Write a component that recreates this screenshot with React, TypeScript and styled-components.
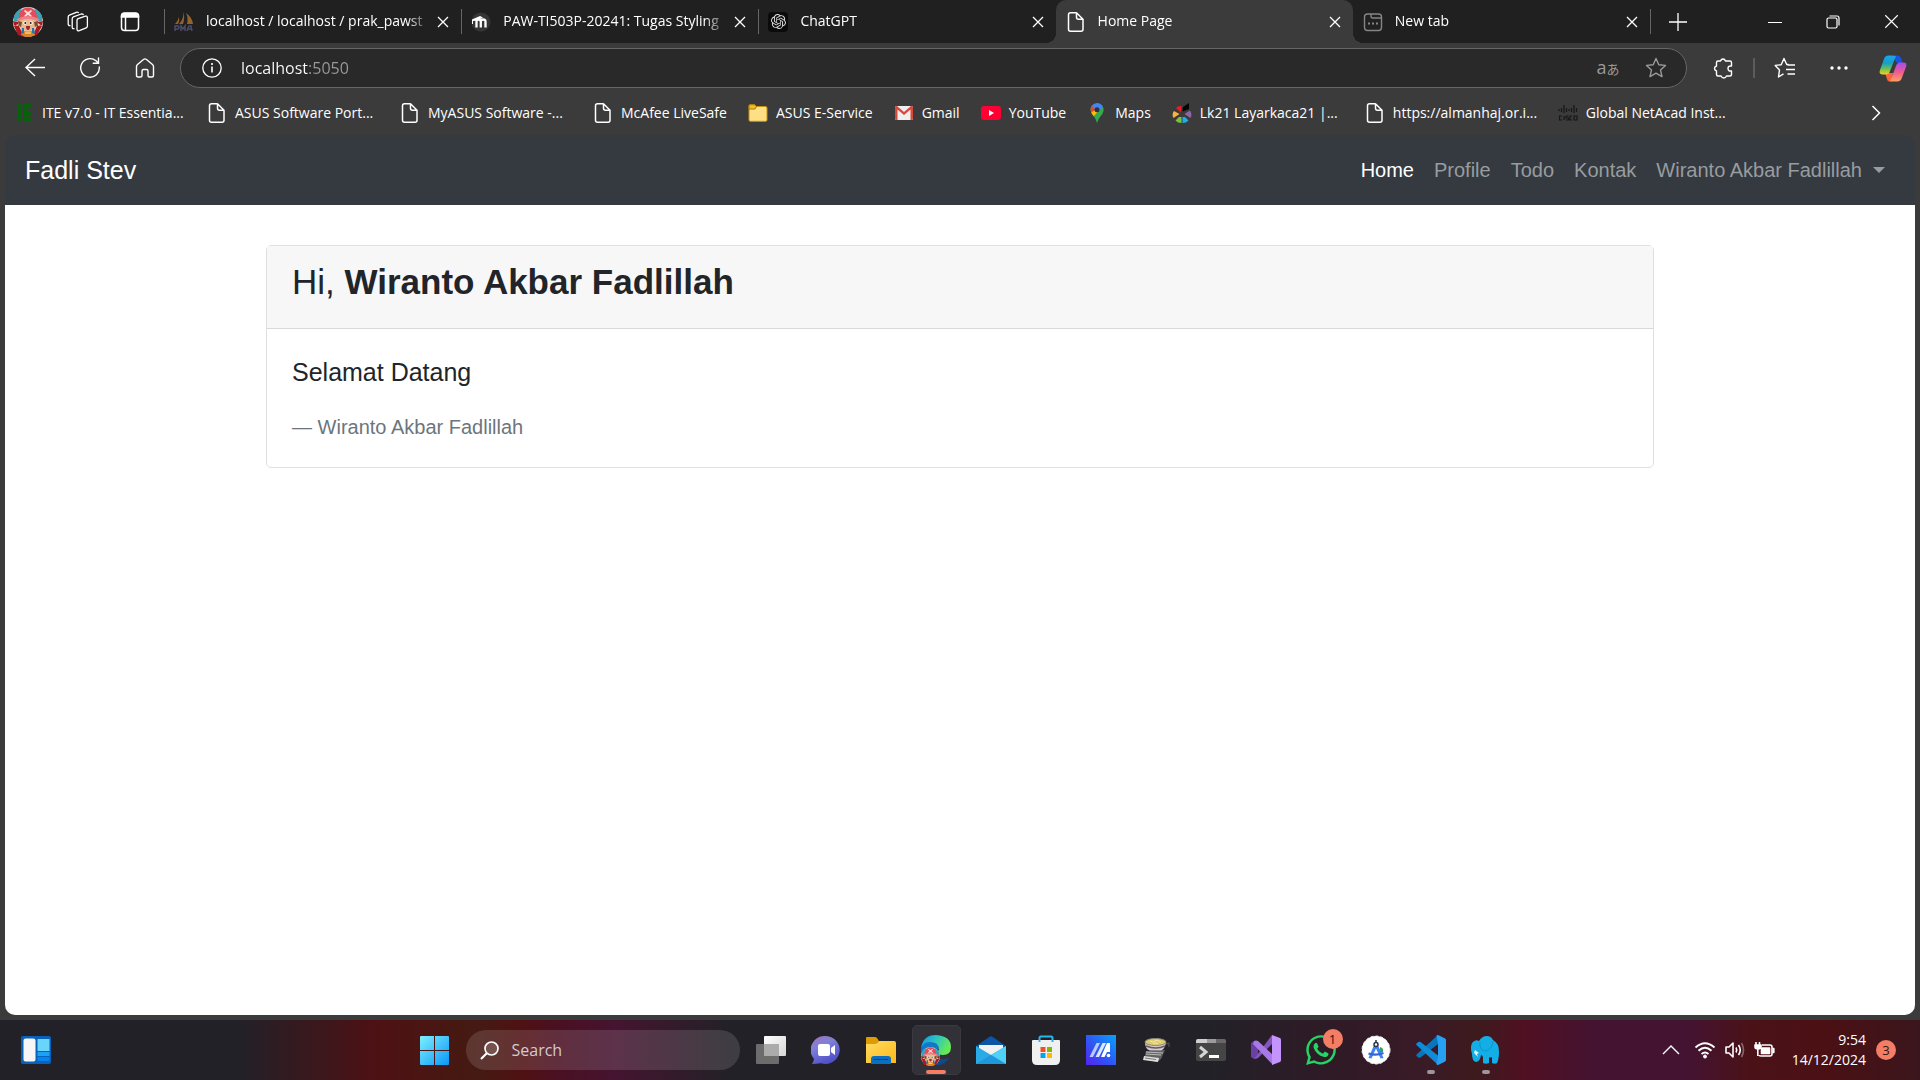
import React from "react";
import styled, { createGlobalStyle, css } from "styled-components";
import { SiOpenai } from "react-icons/si";
import { FaWhatsapp } from "react-icons/fa";

const uiFont = '"Segoe UI", "Open Sans", "Noto Sans", "Noto Sans CJK JP", sans-serif';
const pageFont = '"Liberation Sans", Arial, sans-serif';
const chrome = "#3b3b3b";
const strip = "#202020";

const GlobalStyle = createGlobalStyle`
  *, *::before, *::after { box-sizing: border-box; }
  body { margin: 0; background: ${chrome}; font-family: ${uiFont}; }
  button { font: inherit; }
`;

/* ---------- shared pieces ---------- */

const Screen = styled.div`
  display: flex;
  flex-direction: column;
  min-height: 100vh;
  background: ${chrome};
`;

const IconButton = styled.button<{ $w?: number }>`
  display: flex;
  align-items: center;
  justify-content: center;
  flex: none;
  width: ${(p) => p.$w ?? 48}px;
  height: 100%;
  padding: 0;
  border: 0;
  background: none;
  color: #fff;
  cursor: pointer;
`;

const Line = styled.svg.attrs({ fill: "none", stroke: "currentColor", "aria-hidden": true })`
  display: block;
  flex: none;
`;

const Art = styled.svg.attrs({ "aria-hidden": true })`
  display: block;
  flex: none;
`;

/* ---------- tab strip ---------- */

const TabStrip = styled.header`
  display: flex;
  height: 43px;
  background: ${strip};
`;

const StripTools = styled.div`
  display: flex;
  flex: none;
  padding-left: 3px;
  width: 164px;
`;

const TabList = styled.div`
  display: flex;
  flex: 0 1 1486px;
  min-width: 0;
`;

const NewTabSlot = styled.div`
  display: flex;
  align-items: center;
`;

const activeTab = css`
  background: ${chrome};
  border-radius: 10px 10px 0 0;
  &::before, &::after {
    content: "";
    position: absolute;
    bottom: 0;
    width: 10px;
    height: 10px;
  }
  &::before { left: -10px; background: radial-gradient(circle at 0 0, transparent 10px, ${chrome} 10px); }
  &::after { right: -10px; background: radial-gradient(circle at 100% 0, transparent 10px, ${chrome} 10px); }
`;

const Tab = styled.div<{ $active?: boolean }>`
  position: relative;
  display: flex;
  align-items: center;
  flex: 1 1 0;
  min-width: 0;
  padding-right: 6px;
  ${(p) => p.$active && activeTab}
`;

const TabRule = styled.span<{ $shown?: boolean }>`
  flex: none;
  width: 1px;
  height: 25px;
  background: ${(p) => (p.$shown ? "#666" : "transparent")};
`;

const TabLink = styled.a`
  display: flex;
  align-items: center;
  flex: 1;
  gap: 12px;
  min-width: 0;
  padding-left: 9px;
  color: #fff;
  font-size: 14px;
  line-height: 20px;
  text-decoration: none;
`;

const TabTitle = styled.span`
  flex: 1;
  overflow: hidden;
  white-space: nowrap;
  padding-bottom: 2px;
  mask-image: linear-gradient(90deg, #000 calc(100% - 24px), transparent);
`;

const WindowButtons = styled.div`
  display: flex;
  margin-left: auto;
`;

/* ---------- toolbar ---------- */

const Toolbar = styled.div`
  display: flex;
  align-items: center;
  height: 50px;
  padding: 0 3px 0 7px;
`;

const Address = styled.form`
  display: flex;
  align-items: center;
  flex: 1;
  min-width: 0;
  height: 40px;
  margin: 0 12px 0 8px;
  padding: 0 6px 0 7px;
  border: 1px solid #666;
  border-radius: 20px;
  background: #292929;
`;

const AddressInput = styled.input`
  flex: 1;
  min-width: 0;
  margin-left: 5px;
  padding: 0;
  border: 0;
  outline: 0;
  color: #fff;
  font-family: ${uiFont};
  font-size: 16px;
  line-height: 24px;
  background: linear-gradient(90deg, #fff 67px, #9a9a9a 67px);
  background-clip: text;
  -webkit-text-fill-color: transparent;
`;

const Translate = styled.span`
  color: #9a9a9a;
  font-size: 18px;
  line-height: 20px;
  small { font-size: 13px; }
`;

const ToolRule = styled.span`
  width: 2px;
  height: 20px;
  margin: 0 6px;
  background: #5c5c5c;
`;

const MutedButton = styled(IconButton)`
  color: #9a9a9a;
`;

/* ---------- bookmarks ---------- */

const Bookmarks = styled.nav`
  display: flex;
  align-items: center;
  gap: 20px;
  height: 42px;
  padding: 0 20px 2px 14px;
`;

const Bookmark = styled.a<{ $wide?: boolean }>`
  display: flex;
  align-items: center;
  flex: none;
  gap: 8px;
  width: ${(p) => (p.$wide ? "173px" : "auto")};
  padding-right: ${(p) => (p.$wide ? 0 : 1)}px;
  color: #fff;
  font-size: 14px;
  line-height: 20px;
  text-decoration: none;
  white-space: nowrap;
`;

/* ---------- web page ---------- */

const Page = styled.main`
  flex: 1;
  margin: 0 5px 5px;
  border-radius: 10px;
  overflow: hidden;
  background: linear-gradient(#343a40 70px, #fff 70px);
  color: #212529;
  font-family: ${pageFont};
`;

const Navbar = styled.nav`
  display: flex;
  align-items: center;
  justify-content: space-between;
  height: 70px;
  padding: 0 30px 0 20px;
`;

const Brand = styled.a`
  color: #fff;
  font-size: 25px;
  line-height: 38px;
  text-decoration: none;
`;

const NavList = styled.ul`
  display: flex;
  gap: 20px;
  margin: 0;
  padding: 0;
  list-style: none;
`;

const NavLink = styled.a<{ $active?: boolean }>`
  display: flex;
  align-items: center;
  gap: 11px;
  color: ${(p) => (p.$active ? "#fff" : "#999c9f")};
  font-size: 20px;
  line-height: 30px;
  text-decoration: none;
`;

const Caret = styled.span`
  border: 6px solid transparent;
  border-top-color: currentColor;
  border-bottom: 0;
`;

const Card = styled.section`
  max-width: 1388px;
  margin: 40px auto 0;
  border: 1px solid #dfdfdf;
  border-radius: 5px;
`;

const CardHeader = styled.div`
  padding: 15px 25px 25px;
  border-bottom: 1px solid #d9d9d9;
  background: #f7f7f7;
`;

const Greeting = styled.h1`
  margin: 0;
  font-size: 35px;
  font-weight: 300;
  line-height: 42px;
  b { font-weight: 700; }
`;

const Quote = styled.blockquote`
  margin: 0;
  padding: 24px 25px 25px;
  p { margin: 0 0 21px; font-size: 25px; line-height: 38px; }
  footer { color: #6c757d; font-size: 20px; line-height: 30px; }
`;

/* ---------- taskbar ---------- */

const Taskbar = styled.footer`
  display: grid;
  grid-template-columns: 1fr auto 1fr;
  align-items: center;
  height: 60px;
  background: linear-gradient(
    90deg,
    #232128 12.5%, #351a1f 15.5%, #4d1114 19.5%, #4a1512 22%, #451a13 25%, #4f1113 27.2%,
    #4a1022 29%, #451430 32%, #232128 38%, #232128 63%, #301a26 70%, #391b27 74%,
    #3e1a1d 77%, #501023 79.5%, #441331 83%, #441331 88%, #4a1218 91%, #4b1014 95%, #3a161c 100%
  );
`;

const TaskStart = styled.div`
  padding-left: 8px;
  height: 50px;
`;

const TaskMiddle = styled.div`
  display: flex;
  align-items: center;
`;

const SearchBox = styled.label`
  display: flex;
  align-items: center;
  gap: 13px;
  width: 274px;
  height: 40px;
  margin: 0 4px;
  padding: 0 14px;
  border-radius: 20px;
  background: rgba(255, 255, 255, 0.13);
  color: #fff;
`;

const SearchInput = styled.input`
  flex: 1;
  min-width: 0;
  padding: 0;
  border: 0;
  outline: 0;
  background: none;
  color: #fff;
  font-family: ${uiFont};
  font-size: 16px;
  line-height: 24px;
  &::placeholder { color: #d2cbd0; opacity: 1; }
`;

const AppButton = styled.button<{ $active?: boolean; $open?: boolean }>`
  position: relative;
  display: flex;
  align-items: center;
  justify-content: center;
  width: 49px;
  height: 50px;
  margin: 0 3px;
  padding: 0;
  border: 1px solid ${(p) => (p.$active ? "#3b3940" : "transparent")};
  border-radius: 5px;
  background: ${(p) => (p.$active ? "#333138" : "none")};
  &::after {
    content: "";
    display: ${(p) => (p.$active || p.$open ? "block" : "none")};
    position: absolute;
    bottom: 0;
    left: 50%;
    width: ${(p) => (p.$active ? 20 : 8)}px;
    height: 4px;
    transform: translateX(-50%);
    border-radius: 2px;
    background: ${(p) => (p.$active ? "#f37e65" : "#9d959b")};
  }
`;

const Badge = styled.span<{ $floating?: boolean }>`
  display: flex;
  align-items: center;
  justify-content: center;
  width: 20px;
  height: 20px;
  border-radius: 50%;
  background: #f37e65;
  color: #2a1512;
  font-size: 13px;
  line-height: 20px;
  ${(p) => p.$floating && css`
    position: absolute;
    top: 3px;
    right: 2px;
  `}
`;

const Tray = styled.div`
  display: flex;
  align-items: center;
  justify-content: flex-end;
  gap: 10px;
  padding-right: 24px;
  color: #fff;
`;

const TrayStatus = styled.button`
  display: flex;
  align-items: center;
  gap: 9px;
  margin-left: 4px;
  padding: 0;
  border: 0;
  background: none;
  color: inherit;
`;

const Clock = styled.time`
  margin-left: 7px;
  font-size: 14px;
  line-height: 20px;
  text-align: right;
`;

/* ---------- icons ---------- */

const AvatarArt = () => (
  <>
    <circle cx="15" cy="15" r="15" fill="#e3d3c8" />
    <path d="M1 19l4 9 6 2-6-13zM29 19l-5 9-4 1 5-13zM0 14l5 1v4l-4-1zM30 14l-5 1v4l4-1z" fill="#a81a20" />
    <path d="M1 9q2-5 7-7l3 5-5 7-5 1zM29 9q-2-5-7-7l-3 5 5 7 5 1z" fill="#3f9fb2" />
    <path d="M6 11C6 4 10 .5 15 .5S24 4 24 11z" fill="#e24c5b" />
    <path d="M12 3l3 2 3-2 1 1-2.500 2.500L19 9l-1 1-3-2-3 2-1-1 2.500-2.500L11 4z" fill="#f8ded8" />
    <path d="M4 12q11-6 22 0l-1 3q-10-5-20 0z" fill="#f08086" />
    <path d="M6 14q9-4 18 0v5q-4 5-9 5t-9-5z" fill="#e9b98d" />
    <path d="M5 14l4 1-1 5q-3-1-3-6zM25 14l-4 1 1 5q3-1 3-6z" fill="#7d4a2c" />
    <circle cx="12" cy="16" r="1.800" fill="#fff" /><circle cx="18" cy="16" r="1.800" fill="#fff" />
    <circle cx="12.300" cy="16" r="1" fill="#231c1c" /><circle cx="17.700" cy="16" r="1" fill="#231c1c" />
    <path d="M13 19h4q0 4-2 4t-2-4z" fill="#a32226" />
    <path d="M9 23q6 3 12 0l1 5q-7 4-14 0z" fill="#e08328" />
    <path d="M9 21h2l0 5-3 1zM19 21h2l1 6-3-1z" fill="#2f6fa7" />
    <path d="M12 26h6" stroke="#f7d16a" strokeWidth="1.500" />
  </>
);

const Avatar = () => (
  <Art width="30" height="30" viewBox="0 0 30 30"><AvatarArt /></Art>
);

const Workspaces = () => (
  <Line width="22" height="22" viewBox="0 0 22 22" strokeWidth="1.3" strokeLinejoin="round" strokeLinecap="round">
    <path d="M10 9.300q0-1.300 1.200-1.700l7.200-2.400q1.800-.5 2 1.200v8.600q0 1.300-1.200 1.800l-6.900 2.900q-2.100.6-2.300-1.300z" />
    <path d="M7 17.700q-1.800.2-1.800-1.500V7.800q0-1.400 1.200-1.900l7.800-2.900q1.300-.3 2 .5" />
    <path d="M3 14.700q-1.800 0-1.800-1.600V6q0-1.400 1.200-1.900L9.300 1.300q1.200-.4 2 .3" />
  </Line>
);

const TabActions = () => (
  <Line width="20" height="20" viewBox="0 0 20 20" strokeWidth="1.500">
    <rect x="1.500" y="1.500" width="17" height="17" rx="3" />
    <path d="M1.500 5V4q0-3 3-3h11q3 0 3 3v1z" fill="currentColor" />
    <path d="M5.500 5v13" />
  </Line>
);

const PmaIcon = () => (
  <Art width="20" height="21" viewBox="0 0 20 21">
    <path d="M5 6q1 4-1 7H1q3-3 4-7zM9.500.5q1.500 7-.5 12.500H5q5-5 4.500-12.500zM12 2q6 4 7 11h-6q1.500-6-1-11z" fill="#94632c" />
    <path d="M1 20v-5h3q2 1 0 3H1M7 20v-5l2 3 2-3v5M13 20l2-5h2l1 5M14 18h4" fill="none" stroke="#4b4c67" strokeWidth="1.500" />
  </Art>
);

const MoodleIcon = () => (
  <Art width="20" height="20" viewBox="0 0 20 20">
    <circle cx="10" cy="10" r="9.500" fill="#363636" />
    <path d="M5.500 15.500V9.500q0-2 2-2t2.300 2v6m0-6q0-2 2.300-2t2.400 2v6" fill="none" stroke="#fff" strokeWidth="2.300" />
    <path d="M1 7.500L9 4l3 1.500-5.500 3L2 9v3H1z" fill="#fff" />
  </Art>
);

const GptTile = styled.span`
  display: flex;
  align-items: center;
  justify-content: center;
  flex: none;
  width: 20px;
  height: 20px;
  border-radius: 4px;
  background: #0b0b0b;
  color: #ddd;
`;

const FileIcon = () => (
  <Line width="20" height="20" viewBox="0 0 20 20" strokeWidth="1.500" strokeLinejoin="round">
    <path d="M10.500.8H4.500Q2.500.8 2.500 2.800v14.400q0 2 2 2h10.500q2 0 2-2V7.200L10.500.8v4.400q0 2 2 2h4.500" />
  </Line>
);

const NewTabIcon = () => (
  <Line width="20" height="20" viewBox="0 0 20 20" strokeWidth="1.400" color="#858585">
    <rect x="1.500" y="2" width="17" height="16.500" rx="3" />
    <path d="M8 2v2.500q0 1.500 1.500 1.500h9" />
    <path d="M5 11.500h2M9 11.500h2M13 11.500h2" strokeWidth="2" />
  </Line>
);

const Cross = ({ size = 12 }: { size?: number }) => (
  <Line width={size} height={size} viewBox="0 0 12 12" strokeWidth={size > 12 ? 0.9 : 1.3}>
    <path d="M1 1l10 10M11 1L1 11" />
  </Line>
);

const Copilot = () => (
  <Art width="28" height="27" viewBox="0 0 28 27">
    <defs>
      <linearGradient id="cpA" x1="0" y1="0" x2="0" y2="1"><stop offset="0" stopColor="#1ba5f0" /><stop offset=".4" stopColor="#159fc4" /><stop offset=".7" stopColor="#6fbe56" /><stop offset="1" stopColor="#f5cf1e" /></linearGradient>
      <linearGradient id="cpB" x1="0" y1="0" x2="0" y2="1"><stop offset="0" stopColor="#a24bf0" /><stop offset=".5" stopColor="#ee5a93" /><stop offset="1" stopColor="#fda25d" /></linearGradient>
    </defs>
    <path d="M13 .5h6q2 0 3 2.500l1.500 5H18z" fill="#1a53de" />
    <path d="M6 18h8l-2 8.500H10.500Q8.500 26.500 8 24z" fill="#f8653b" />
    <path d="M17 1Q15 .5 12 .5H9.500Q6 .5 4.800 4.500L1 15q-1.500 4.500 2.500 4.500H7q3 0 4-3.500z" fill="url(#cpA)" />
    <path d="M11 26.500h7q4 0 5-4L27 12q1.500-4.500-2.500-4.500H21q-3 0-4 3.500z" fill="url(#cpB)" />
  </Art>
);

const FolderSmall = () => (
  <Art width="20" height="18" viewBox="0 0 20 18">
    <path d="M1 4V2q0-1.300 1.300-1.300h4L8.500 2.500h9Q19 2.500 19 4v12q0 1.300-1.300 1.300H2.300Q1 17.300 1 16z" fill="#ffdf85" stroke="#c49310" />
    <path d="M1 5V2q0-1.300 1.300-1.300h4L8.500 2.500 7 5z" fill="#f0bd2c" stroke="#a97b08" />
  </Art>
);

const GmailIcon = () => (
  <Art width="20" height="16" viewBox="0 0 20 16">
    <rect x="1" y="1" width="18" height="14" rx="1.500" fill="#f0efef" />
    <path d="M1 2.500v11Q1 15 2.500 15H3.500V4.500L10 10l6.500-5.500V15h1q1.500 0 1.500-1.500v-11Q19 .8 17 1l-7 6-7-6Q1 .8 1 2.500z" fill="#d9483b" />
  </Art>
);

const YoutubeIcon = () => (
  <Art width="20" height="14" viewBox="0 0 20 14">
    <rect width="20" height="14" rx="3" fill="#ff0033" />
    <path d="M8 4l5 3-5 3z" fill="#fff" />
  </Art>
);

const MapsIcon = () => (
  <Art width="20" height="20" viewBox="0 0 20 20">
    <path d="M10 20q-1-4-3.300-6.700Q3.500 10 3.500 6.700q0-2 1-3.700L15.800 3.500Q17 6 16.500 8q-.5 2.500-2.700 5Q11 16 10 20z" fill="#34a853" />
    <path d="M4.200 8.800Q4.700 11 6.700 13.300L14 5 7 3z" fill="#fbbc04" />
    <path d="M4.800 2.500l4 4-4.500 3Q2.800 5 4.800 2.500z" fill="#ea4335" />
    <path d="M4.800 2.500Q7 0 10 0q4 0 5.800 3.500L11 9 8 6z" fill="#4285f4" />
    <circle cx="10" cy="6.700" r="2.500" fill="#293247" />
  </Art>
);

const LkIcon = () => (
  <Art width="20" height="20" viewBox="0 0 20 20">
    <path d="M9 9.500L4 5q2-2.500 5.500-2z" fill="#ed1c24" />
    <path d="M10.500 8.500L11 4l6-4v6z" fill="#050505" />
    <path d="M7.500 11L1.500 15q-2-4 .5-7z" fill="#fbb040" />
    <path d="M12.500 11l5.500-3.500q2.500 4 .5 7.500z" fill="#8f64a8" />
    <path d="M9.500 14v6q-4 0-6-2.500L7 14z" fill="#7ac143" />
    <path d="M10.500 14H13l3.500 3.500q-2 2.500-6 2.500z" fill="#1caee4" />
  </Art>
);

const IteIcon = () => (
  <Art width="20" height="20" viewBox="0 0 20 20"><path d="M3 1h5v18H3zM10 1h8v4h-4v3h3v4h-3v3h4v4h-8z" fill="#085f0c" /></Art>
);

const CiscoIcon = () => (
  <Art width="20" height="18" viewBox="0 0 20 18">
    <path d="M1 5v2M3.500 4v4M6 1v8M8.500 4v4M11 5v2M13.500 4v4M16 1v8M18.500 4v4" stroke="#171717" strokeWidth="1.200" />
    <path d="M4 12H1.500v4H4M6 12v4M10.500 12H8v2h2.500v2H8M14 12h-2v4h2M16 12h3v4h-3z" stroke="#171717" fill="none" strokeWidth="1.200" />
  </Art>
);

const Widgets = () => (
  <Art width="30" height="28" viewBox="0 0 30 28">
    <rect width="30" height="28" rx="2" fill="#0a61ba" />
    <rect x="2.500" y="2.500" width="12" height="23" rx="2" fill="#f6f6f6" />
    <path d="M16.500 3h12v12h-12z" fill="#69d5fb" /><path d="M16.500 16h12v4h-12z" fill="#1ba1f5" /><path d="M16.500 21h12v4h-12z" fill="#0484ec" />
  </Art>
);

const WindowsLogo = () => (
  <Art width="29" height="29" viewBox="0 0 29 29">
    <defs><linearGradient id="win" x1="0" y1="0" x2="1" y2="1"><stop stopColor="#7cf0ff" /><stop offset="1" stopColor="#0c96f8" /></linearGradient></defs>
    <path d="M1 0h13v14H0V1q0-1 1-1zM15 0h13q1 0 1 1v13H15zM0 15h14v14H1q-1 0-1-1zM15 15h14v13q0 1-1 1H15z" fill="url(#win)" />
  </Art>
);

const TaskView = () => (
  <Art width="30" height="28" viewBox="0 0 30 28">
    <defs><linearGradient id="tv" x1="0" y1="0" x2="1" y2="1"><stop stopColor="#fff" /><stop offset="1" stopColor="#d5d5d5" /></linearGradient></defs>
    <rect x="8" width="22" height="20" rx="1" fill="url(#tv)" />
    <rect y="8" width="23" height="20" rx="1" fill="#6c6c6c" /><path d="M8 8h15v12H8z" fill="#ababab" />
  </Art>
);

const ChatIcon = () => (
  <Art width="30" height="30" viewBox="0 0 30 30">
    <defs><linearGradient id="chat" x1="0" y1="0" x2=".5" y2="1"><stop stopColor="#a370b4" /><stop offset=".4" stopColor="#7f81d8" /><stop offset="1" stopColor="#5050c8" /></linearGradient></defs>
    <path d="M15 1a14 14 0 1 1-5 27.200Q6 29 1 29q2-3 2-5A14 14 0 0 1 15 1z" fill="url(#chat)" />
    <rect x="7" y="9" width="12" height="12" rx="2" fill="#fff" /><path d="M20 13l4-3v10l-4-3z" fill="#fff" />
  </Art>
);

const Explorer = () => (
  <Art width="30" height="28" viewBox="0 0 30 28">
    <defs><linearGradient id="exp" x1="0" y1="0" x2="1" y2="1"><stop stopColor="#ffda62" /><stop offset="1" stopColor="#fdba18" /></linearGradient></defs>
    <path d="M0 2q0-1 1-1h8q1 0 2 1l2 3-3 4H0z" fill="#dd9c05" />
    <path d="M0 8h9q2 0 3-2l1-1h15q2 0 2 2v20H0z" fill="url(#exp)" />
    <path d="M5 28v-5q0-3 3-3h14q3 0 3 3v5z" fill="#0b6fc1" /><path d="M8 23.500h14" stroke="#06427d" />
  </Art>
);

const Edge = () => (
  <Art width="32" height="32" viewBox="0 0 32 32">
    <defs>
      <linearGradient id="edA" x1="0" y1="0" x2="1" y2=".4"><stop stopColor="#1c8fe0" /><stop offset=".5" stopColor="#2cc3c4" /><stop offset="1" stopColor="#65e957" /></linearGradient>
    </defs>
    <path d="M1 14Q3 1 16 1q15 1 15 12 0 8-8 8-5 0-6-3 3-2 1-5-3-4-8-4-6 0-9 5z" fill="url(#edA)" />
    <path d="M1 16q1-8 9-8 8 0 9 6-4 3-3 7 2 5 8 6-8 4-15-1Q1 24 1 16z" fill="#1179c9" />
    <path d="M15 23q6 4 14 1-5 8-13 7z" fill="#0d4b90" />
    <svg x="1" y="13" width="19" height="19" viewBox="0 0 30 30"><AvatarArt /></svg>
  </Art>
);

const MailIcon = () => (
  <Art width="30" height="28" viewBox="0 0 30 28">
    <path d="M0 10L14 .5q1-.7 2 0L30 10v4H0z" fill="#0a55a5" />
    <path d="M3 9h24v10H3z" fill="#f1f1f1" />
    <path d="M0 10l15 9L30 10v18H0z" fill="#2aabe8" />
    <path d="M30 10v18L15 19z" fill="#4fd0f6" /><path d="M0 28l15-9 15 9z" fill="#1e97dc" />
  </Art>
);

const StoreIcon = () => (
  <Art width="30" height="30" viewBox="0 0 30 30">
    <path d="M1 6q0-1 1-1h26q1 0 1 1v19q0 5-5 5H6q-5 0-5-5z" fill="#f0f0f0" />
    <path d="M8.500 7V3q0-1.500 1.500-1.500h10q1.500 0 1.500 1.500v4" fill="none" stroke="#2bb5e8" strokeWidth="2" />
    <path d="M9.500 12h5v5h-5z" fill="#f25022" /><path d="M16 12h5v5h-5z" fill="#7fba00" /><path d="M9.500 18h5v5h-5z" fill="#00a4ef" /><path d="M16 18h5v5h-5z" fill="#ffb900" />
  </Art>
);

const MyAsus = () => (
  <Art width="30" height="30" viewBox="0 0 30 30">
    <defs><linearGradient id="asus" x1="0" y1="1" x2="1" y2="0"><stop stopColor="#5521f2" /><stop offset=".5" stopColor="#2c5cf5" /><stop offset="1" stopColor="#07a2fb" /></linearGradient></defs>
    <path d="M0 0h30v30H0z" fill="url(#asus)" />
    <path d="M10.500 8h3.500L7 22H3.500z" fill="#b5ccff" /><path d="M16.500 8H20l-7 14H9.500z" fill="#dce7ff" />
    <path d="M21 8h3v9h-3l-2.500 5h-3.500z" fill="#fff" /><circle cx="22.500" cy="20.500" r="1.800" fill="#fff" />
  </Art>
);

const BowlIcon = () => (
  <Art width="30" height="30" viewBox="0 0 30 30">
    <path d="M5 16l19-1-4 9-4 3-13-3z" fill="#626264" />
    <path d="M3 21l15 2-1 4-15-2z" fill="#dedede" /><path d="M4 23l11 1.500" stroke="#777" />
    <path d="M5 17l17 1M5 19l15 1" stroke="#bdbdbd" />
    <path d="M4 7h21q-1 7-5 8.500H9Q4 14 4 7z" fill="#d0ccd0" /><path d="M5 11q10 4 19 0" stroke="#6b5560" fill="none" strokeWidth="1.500" />
    <ellipse cx="14.500" cy="7" rx="10.500" ry="3.500" fill="#dcca70" stroke="#8e8a78" />
    <path d="M9 6q3 2 5 0t6 1M12 8.500q3-1 5 0" stroke="#f5eaa8" fill="none" /><path d="M25 9l3-1v4" stroke="#555" fill="none" />
  </Art>
);

const TerminalIcon = () => (
  <Art width="30" height="22" viewBox="0 0 30 22">
    <rect width="30" height="22" rx="2" fill="#454545" /><path d="M0 4V2q0-2 2-2h9v4z" fill="#cfcfcf" /><path d="M11 0h9v4h-9z" fill="#9e9a9d" /><path d="M20 0h8q2 0 2 2v2H20z" fill="#6a666a" />
    <path d="M4 8l6 5-6 5" fill="none" stroke="#d5d5d5" strokeWidth="3" /><path d="M13 17.500h10" stroke="#fff" strokeWidth="3" />
  </Art>
);

const VisualStudio = () => (
  <Art width="30" height="30" viewBox="0 0 30 30">
    <path d="M0 8l3-2 4 1v16l-4 1-3-2z" fill="#6a40a5" /><path d="M3 24l4-1L21 9V0z" fill="#8256bd" />
    <path d="M3 6q2-1 4 0l15 14v10L2 9z" fill="#a877e8" /><path d="M21 0l8 3q1 .5 1 2v20q0 1.500-1 2l-8 3z" fill="#c493fb" />
  </Art>
);

const AndroidStudio = () => (
  <Art width="30" height="30" viewBox="0 0 30 30">
    <circle cx="15" cy="15" r="14" fill="#fff" stroke="#e9eef5" strokeWidth="1" strokeDasharray="3 2" />
    <path d="M19 12q4 1 3 5l-3 1z" fill="#30a35a" />
    <path d="M13.500 9h3l6 14-3 .500-4.500-10-4.500 10-3-.5z" fill="#3f82f5" />
    <path d="M7.500 18.500q7.500 2.500 15-.5" stroke="#2e67d3" strokeWidth="2.200" fill="none" />
    <circle cx="15" cy="9.500" r="2" fill="#fff" stroke="#2b3540" strokeWidth="1.500" /><path d="M15 5v3" stroke="#2b3540" strokeWidth="1.500" />
  </Art>
);

const VsCode = () => (
  <Art width="30" height="30" viewBox="0 0 30 30">
    <path d="M1 19q-1.500 1.300 0 2.500l1.500 1q1 .7 2 0L22 9V0z" fill="#0875bd" />
    <path d="M1 10.500q-1.500-1.300 0-2.500l1.500-1q1-.7 2 0L22 20.500V30z" fill="#0f8bd8" />
    <path d="M20.500 29.500L22 21V9L20.500.5Q21.300-.3 22.500.2l6.200 3Q30 3.800 30 5v20q0 1.200-1.300 1.800l-6.200 3q-1.200.5-2-.3z" fill="#27a0f2" />
  </Art>
);

const Elephant = () => (
  <Art width="30" height="30" viewBox="0 0 30 30">
    <path d="M8 6Q11 1 16 1q4 0 6 4 6 3 6 12 0 7-2 11-2 1.500-5 0v-6q-2 1-3 0v6q-3 1.500-6 0v-6q-1-2-2-2-1 7-5 7-4-1-4-8-2-6 0-11 3-4 7-2z" fill="#13aee5" />
    <path d="M9 7q-1 9 6 9 6-1 7-10" fill="none" stroke="#0b93c8" strokeWidth=".9" />
    <path d="M4 15l4 3-2 1 1 3-4-4z" fill="#e4f2f5" />
  </Art>
);

/* ---------- data ---------- */

const tabs = [
  { title: "localhost / localhost / prak_pawst", icon: <PmaIcon />, rule: true },
  { title: "PAW-TI503P-20241: Tugas Styling", icon: <MoodleIcon />, rule: true },
  { title: "ChatGPT", icon: <GptTile><SiOpenai size={15} /></GptTile>, rule: true },
  { title: "Home Page", icon: <FileIcon />, active: true },
  { title: "New tab", icon: <NewTabIcon /> },
];

const bookmarks = [
  { label: "ITE v7.0 - IT Essentia...", icon: <IteIcon />, wide: true },
  { label: "ASUS Software Port...", icon: <FileIcon />, wide: true },
  { label: "MyASUS Software -...", icon: <FileIcon />, wide: true },
  { label: "McAfee LiveSafe", icon: <FileIcon /> },
  { label: "ASUS E-Service", icon: <FolderSmall /> },
  { label: "Gmail", icon: <GmailIcon /> },
  { label: "YouTube", icon: <YoutubeIcon /> },
  { label: "Maps", icon: <MapsIcon /> },
  { label: "Lk21 Layarkaca21 |...", icon: <LkIcon />, wide: true },
  { label: "https://almanhaj.or.i...", icon: <FileIcon />, wide: true },
  { label: "Global NetAcad Inst...", icon: <CiscoIcon />, wide: true },
];

const links = ["Home", "Profile", "Todo", "Kontak"];

const apps = [
  { name: "Task view", icon: <TaskView /> },
  { name: "Chat", icon: <ChatIcon /> },
  { name: "File Explorer", icon: <Explorer /> },
  { name: "Microsoft Edge", icon: <Edge />, active: true },
  { name: "Mail", icon: <MailIcon /> },
  { name: "Microsoft Store", icon: <StoreIcon /> },
  { name: "MyASUS", icon: <MyAsus /> },
  { name: "Utility", icon: <BowlIcon /> },
  { name: "Terminal", icon: <TerminalIcon /> },
  { name: "Visual Studio", icon: <VisualStudio /> },
  { name: "WhatsApp", icon: <FaWhatsapp size={34} color="#25d366" />, badge: 1 },
  { name: "Android Studio", icon: <AndroidStudio /> },
  { name: "Visual Studio Code", icon: <VsCode />, open: true },
  { name: "Laragon", icon: <Elephant />, open: true },
];

/* ---------- app ---------- */

export default function App() {
  return (
    <Screen>
      <GlobalStyle />
      <TabStrip>
        <StripTools>
          <IconButton $w={50} aria-label="Account"><Avatar /></IconButton>
          <IconButton $w={49} aria-label="Workspaces"><Workspaces /></IconButton>
          <IconButton $w={56} aria-label="Tab actions"><TabActions /></IconButton>
        </StripTools>
        <TabList>
          {tabs.map((t) => (
            <Tab key={t.title} $active={t.active}>
              <TabRule $shown={t.rule} />
              <TabLink href="#">{t.icon}<TabTitle>{t.title}</TabTitle></TabLink>
              <IconButton $w={24} aria-label="Close tab"><Cross /></IconButton>
            </Tab>
          ))}
        </TabList>
        <NewTabSlot>
          <TabRule $shown />
          <IconButton $w={53} aria-label="New tab">
            <Line width="18" height="18" viewBox="0 0 18 18" strokeWidth="1.300"><path d="M9 0v18M0 9h18" /></Line>
          </IconButton>
        </NewTabSlot>
        <WindowButtons>
          <IconButton $w={58} aria-label="Minimize"><Line width="14" height="14" viewBox="0 0 14 14"><path d="M0 7.500h14" /></Line></IconButton>
          <IconButton $w={58} aria-label="Restore">
            <Line width="14" height="14" viewBox="0 0 14 14" strokeWidth="1.200"><rect x="1" y="3" width="10" height="10" rx="1.500" /><path d="M3.500 1H11q2 0 2 2v7.500" /></Line>
          </IconButton>
          <IconButton $w={58} aria-label="Close"><Cross size={15} /></IconButton>
        </WindowButtons>
      </TabStrip>

      <Toolbar>
        <IconButton $w={55} aria-label="Back">
          <Line width="22" height="20" viewBox="0 0 22 20" strokeWidth="1.400"><path d="M11 1L2 9.500 11 18M2 9.500h19" /></Line>
        </IconButton>
        <IconButton $w={55} aria-label="Refresh">
          <Line width="22" height="22" viewBox="0 0 22 22" strokeWidth="1.400" strokeLinecap="round"><path d="M20.300 10A9.300 9.300 0 1 1 17 3.800l2 2M19.500 1v5.200h-5.300" /></Line>
        </IconButton>
        <IconButton $w={55} aria-label="Home">
          <Line width="20" height="20" viewBox="0 0 20 20" strokeWidth="1.400" strokeLinejoin="round"><path d="M8.500 1.500q1.500-1.200 3 0l6 5q1 1 1 2v9q0 1.500-1.500 1.500h-2.500Q13 19 13 17.500V13q0-1.500-1.500-1.500h-3Q7 11.500 7 13v4.500Q7 19 5.500 19H3q-1.500 0-1.500-1.500v-9q0-1 1-2z" /></Line>
        </IconButton>
        <Address onSubmit={(e) => e.preventDefault()}>
          <IconButton type="button" aria-label="Site information">
            <Line width="20" height="20" viewBox="0 0 20 20" strokeWidth="1.300"><circle cx="10" cy="10" r="9.200" /><path d="M10 8.500v6M10 5v2" strokeWidth="1.600" /></Line>
          </IconButton>
          <AddressInput aria-label="Address" defaultValue="localhost:5050" />
          <MutedButton type="button" aria-label="Translate"><Translate>a<small>あ</small></Translate></MutedButton>
          <MutedButton type="button" aria-label="Add to favorites">
            <Line width="22" height="22" viewBox="0 0 22 22" strokeWidth="1.400" strokeLinejoin="round"><path d="M11 1.500l2.800 6.200 6.700.7-5 4.500 1.500 6.700L11 16.200l-6 3.400 1.500-6.700-5-4.500 6.700-.7z" /></Line>
          </MutedButton>
        </Address>
        <IconButton aria-label="Extensions">
          <Line width="21" height="21" viewBox="0 0 21 21" strokeWidth="1.400" strokeLinejoin="round"><path d="M7.500 3q.7-2 2.500-2t2.500 2H17q1.500 0 1.500 1.500v3.500q-3.500-.5-3.500 2.500t3.500 2.500v3.500q0 1.500-1.500 1.500h-3.500q-.8 2-2.700 2t-2.700-2H5Q3.500 18 3.500 16.500V13q-2-.7-2-2.500t2-2.500V4.500Q3.500 3 5 3z" /></Line>
        </IconButton>
        <ToolRule />
        <IconButton aria-label="Favorites">
          <Line width="22" height="22" viewBox="0 0 22 22" strokeWidth="1.400" strokeLinejoin="round"><path d="M14.500 7.500H12.700L10 1.500 7.200 7.700l-6 .7 4.300 4.500L4.500 20l5-3.200M13.500 8H21M12 12.500h9M13.500 17H21" /></Line>
        </IconButton>
        <IconButton $w={60} aria-label="Settings and more">
          <Art width="18" height="4" viewBox="0 0 18 4" fill="#fff"><circle cx="2" cy="2" r="1.700" /><circle cx="9" cy="2" r="1.700" /><circle cx="16" cy="2" r="1.700" /></Art>
        </IconButton>
        <IconButton aria-label="Copilot"><Copilot /></IconButton>
      </Toolbar>

      <Bookmarks aria-label="Favorites bar">
        {bookmarks.map((b) => (
          <Bookmark key={b.label} href="#" $wide={b.wide}>{b.icon}{b.label}</Bookmark>
        ))}
        <WindowButtons>
          <IconButton aria-label="More favorites">
            <Line width="10" height="16" viewBox="0 0 10 16" strokeWidth="1.500"><path d="M1.500 1l7 7-7 7" /></Line>
          </IconButton>
        </WindowButtons>
      </Bookmarks>

      <Page>
        <Navbar>
          <Brand href="#">Fadli Stev</Brand>
          <NavList>
            {links.map((l, i) => (
              <li key={l}><NavLink href="#" $active={i === 0}>{l}</NavLink></li>
            ))}
            <li><NavLink href="#">Wiranto Akbar Fadlillah<Caret /></NavLink></li>
          </NavList>
        </Navbar>
        <Card>
          <CardHeader><Greeting>Hi, <b>Wiranto Akbar Fadlillah</b></Greeting></CardHeader>
          <Quote>
            <p>Selamat Datang</p>
            <footer>— Wiranto Akbar Fadlillah</footer>
          </Quote>
        </Card>
      </Page>

      <Taskbar>
        <TaskStart><AppButton aria-label="Widgets"><Widgets /></AppButton></TaskStart>
        <TaskMiddle>
          <AppButton aria-label="Start"><WindowsLogo /></AppButton>
          <SearchBox>
            <Line width="19" height="19" viewBox="0 0 19 19" strokeWidth="1.700"><circle cx="11.500" cy="7.500" r="6.500" fill="rgba(255,255,255,0.15)" /><path d="M7 12l-6 6" strokeWidth="2.200" /></Line>
            <SearchInput type="text" placeholder="Search" aria-label="Search" />
          </SearchBox>
          {apps.map((a) => (
            <AppButton key={a.name} aria-label={a.name} $active={a.active} $open={a.open}>
              {a.icon}
              {a.badge && <Badge $floating>{a.badge}</Badge>}
            </AppButton>
          ))}
        </TaskMiddle>
        <Tray>
          <Line width="18" height="18" viewBox="0 0 18 18" strokeWidth="1.400"><path d="M1 13l8-8 8 8" /></Line>
          <TrayStatus aria-label="Network, volume and battery">
            <Line width="22" height="20" viewBox="0 0 22 20" strokeWidth="1.900">
              <path d="M1.500 7.500q9.500-8.500 19 0M4.500 10.800q6.500-6 13 0M7.500 14q3.500-3 7 0" /><circle cx="11" cy="16.500" r="1.500" fill="currentColor" strokeWidth="1" />
            </Line>
            <Line width="20" height="18" viewBox="0 0 20 18" strokeWidth="1.600" strokeLinejoin="round">
              <path d="M1 6h3l4-4v14l-4-4H1zM11 6.500q1.500 2.500 0 5M13.500 4q3.500 5 0 10" /><path d="M16.500 2q4 7 0 14" opacity=".35" />
            </Line>
            <Line width="21" height="18" viewBox="0 0 21 18" strokeWidth="1.600" strokeLinejoin="round">
              <path d="M8 4h8q2 0 2 2v7q0 2-2 2H7q-2 0-2-1" /><path d="M8 7h7.500v5.500H7.500V9z" fill="currentColor" /><path d="M18.500 7.500h1.300v4h-1.300M2 1v3M5.500 1v3M1 4h6v2q0 2-3 2t-3-2zM3.800 8v7" fill="currentColor" />
            </Line>
          </TrayStatus>
          <Clock>9:54<br />14/12/2024</Clock>
          <Badge>3</Badge>
        </Tray>
      </Taskbar>
    </Screen>
  );
}
